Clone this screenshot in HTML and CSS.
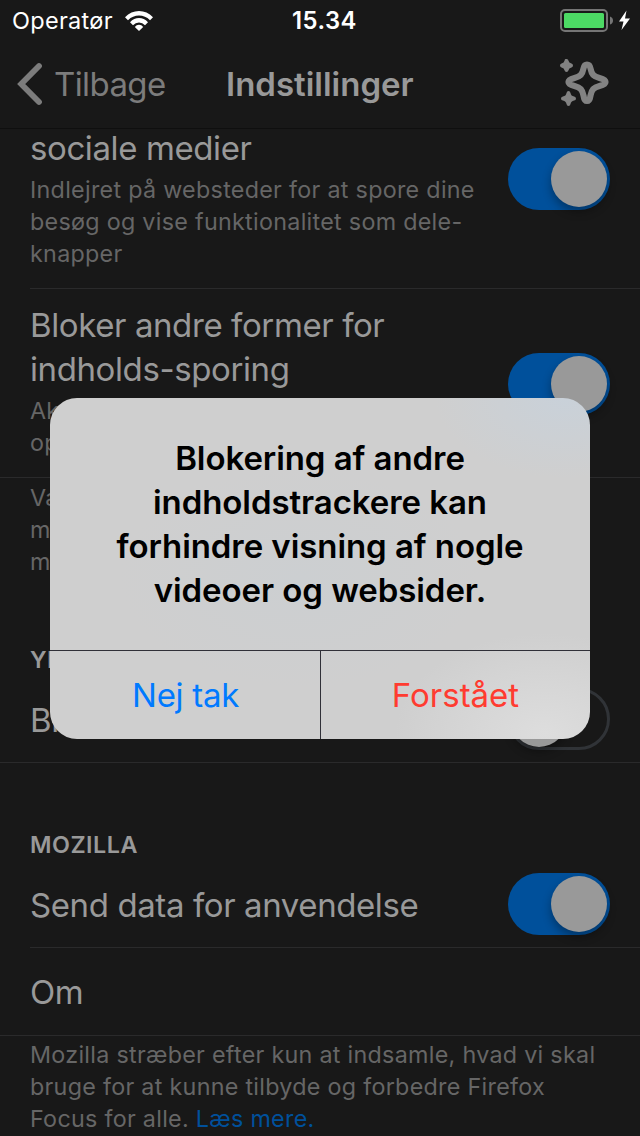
FILE: index.html
```html
<!DOCTYPE html>
<html lang="da">
<head>
<meta charset="utf-8">
<title>Indstillinger</title>
<link rel="stylesheet" href="styles.css">
</head>
<body>
<div class="screen">
  <header class="status">
    <div class="status-left">
      <span class="carrier">Operatør</span>
      <svg class="wifi" width="28" height="20" viewBox="0 0 28 20" fill="#fff">
        <path d="M0 6.200Q6 0 14 0t14 6.200l-3 3Q20.200 4.600 14 4.600T3 9.200z"/>
        <path d="M5 11.200Q9 7 14 7t9 4.200l-3 3Q17.500 11.500 14 11.500T8 14.200z"/>
        <path d="M9.800 16Q11.500 13.700 14 13.700t4.200 2.300L14 20z"/>
      </svg>
    </div>
    <span class="clock">15.34</span>
    <div class="status-right">
      <svg width="72" height="24" viewBox="0 0 72 24">
        <rect x="1" y="1" width="46" height="21" rx="4" fill="none" stroke="#757575" stroke-width="2"/>
        <rect x="4" y="4" width="40" height="15" rx="1.500" fill="#4cd964"/>
        <path d="M50 7.500Q53 8.500 53 11.500T50 15.500z" fill="#757575"/>
        <path d="M66.500 1.500L59 12.500h4.500L61.500 21 70 9.500h-5z" fill="#fff"/>
      </svg>
    </div>
  </header>
  <nav class="nav">
    <div class="back">
      <svg width="26" height="44" viewBox="0 0 26 44" fill="none" stroke="#7c7c7c" stroke-width="5.800" stroke-linecap="round" stroke-linejoin="miter"><path d="M23 4L5.200 22 23 40"/></svg>
      <span class="back-label">Tilbage</span>
    </div>
    <h1 class="nav-title">Indstillinger</h1>
    <svg class="sparkle" width="50" height="50" viewBox="0 0 50 50" fill="#828282">
      <path d="M27 5.500c2.200 0 3 1.500 3.500 4 1.200 6 3 8 9 9.500 4 1 6 1.800 6 4s-2 3-6 4c-6 1.500-7.800 3.500-9 9.500-.5 3.500-1.300 5.500-3.500 5.500s-3-2-3.500-5.500c-1.200-6-3-8-9-9.500-4-1-6-1.800-6-4s2-3 6-4c6-1.500 7.800-3.500 9-9.500.5-2.500 1.300-4 3.500-4z" fill="none" stroke="#828282" stroke-width="6.200"/>
      <path d="M5.500 0q.6-.3 1.200 0 1.600 0 1.800 1.700.3 2.300 3 2.800 1.500.3 1.500 2t-1.500 2Q8.800 9 8.500 11.300 8.200 13 6.500 13T4.500 11.300Q4.200 9 1.500 8.500 0 8.200 0 6.500t1.500-2Q4.200 4 4.500 1.700 4.700.2 5.500 0z"/>
      <path d="M8.500 32q1.600 0 2 1.900.5 3 3.600 3.500 1.900.3 1.900 2.100t-1.900 2.100q-3.100.5-3.600 3.500-.4 1.900-2 1.900t-2-1.900q-.5-3-3.600-3.500Q1 41.300 1 39.500t1.900-2.100q3.100-.5 3.600-3.500.4-1.900 2-1.900z"/>
    </svg>
  </nav>
  <main class="list">
    <section class="row row-first">
      <div class="text">
        <div class="title">sociale medier</div>
        <div class="detail">Indlejret på websteder for at spore dine<br>besøg og vise funktionalitet som dele-<br>knapper</div>
      </div>
      <div class="switch on"><i class="knob"></i></div>
    </section>
    <section class="row row-second">
      <div class="text">
        <div class="title">Bloker andre former for<br>indholds-sporing</div>
        <div class="detail">Ak<br>op</div>
      </div>
      <div class="switch on"><i class="knob"></i></div>
    </section>
    <div class="footnote hidden-note">Va<br>m<br>m</div>
    <h2 class="heading">YD</h2>
    <section class="row row-single full">
      <div class="title">Bl</div>
      <div class="switch off"><i class="knob"></i></div>
    </section>
    <h2 class="heading mozilla">MOZILLA</h2>
    <section class="row row-single">
      <div class="title">Send data for anvendelse</div>
      <div class="switch on"><i class="knob"></i></div>
    </section>
    <section class="row row-about full">
      <div class="title">Om</div>
    </section>
    <div class="footnote">Mozilla stræber efter kun at indsamle, hvad vi skal<br>bruge for at kunne tilbyde og forbedre Firefox<br>Focus for alle. <a class="link">Læs mere.</a></div>
  </main>
  <div class="dialog" role="alertdialog">
    <p class="message">Blokering af andre<br>indholdstrackere kan<br>forhindre visning af nogle<br>videoer og websider.</p>
    <div class="actions">
      <div class="action cancel">Nej tak</div>
      <div class="action confirm">Forstået</div>
    </div>
  </div>
</div>
</body>
</html>
```

FILE: styles.css
```css
* { box-sizing: border-box; }
body { margin: 0; background: #181818; }
.screen {
  position: relative;
  width: 640px;
  height: 1136px;
  overflow: hidden;
  display: flex;
  flex-direction: column;
  background: #181818;
  color: #999;
  font-family: Inter, "Liberation Sans", sans-serif;
}
.status {
  flex: none;
  height: 40px;
  display: grid;
  grid-template-columns: 1fr auto 1fr;
  align-items: center;
  padding: 0 8px 0 12px;
  color: #fff;
}
.status-left { display: flex; align-items: center; gap: 12px; }
.carrier { padding-top: 1px; font-size: 23.5px; line-height: 40px; letter-spacing: 0.3px; }
.clock { padding: 1px 0 0 5px; font-size: 23.8px; line-height: 40px; font-weight: 600; letter-spacing: 0.5px; }
.status-right { display: flex; justify-content: flex-end; }
.nav {
  flex: none;
  height: 89px;
  display: grid;
  grid-template-columns: 210px auto 1fr;
  align-items: center;
  padding: 0 30px 0 16px;
  border-bottom: 1px solid #0f0f0f;
}
.back { display: flex; align-items: center; gap: 12px; }
.back-label { font-size: 33px; line-height: 44px; color: #7c7c7c; letter-spacing: -0.6px; }
.nav-title { margin: 0; font-size: 33px; line-height: 44px; font-weight: 600; color: #999; }
.sparkle { justify-self: end; }
.list { flex: 1; overflow: hidden; }
.row {
  display: flex;
  justify-content: space-between;
  margin-left: 30px;
  padding-right: 30px;
  border-bottom: 1px solid #2a2a2b;
}
.row.full { margin-left: 0; padding-left: 30px; }
.row-first { margin-top: -3px; padding-bottom: 18px; }
.row-first .switch { margin-top: 22px; }
.row-first .detail { margin-top: 4px; }
.row-second { margin-left: 0; padding: 14px 30px 18px; }
.row-second .switch { margin-top: 50px; }
.row-second .detail { margin-top: 4px; }
.title { font-size: 33px; line-height: 44px; white-space: nowrap; letter-spacing: -0.4px; }
.detail, .footnote { font-size: 23.3px; line-height: 32px; color: #666; white-space: nowrap; letter-spacing: 0.29px; }
.footnote { padding: 3px 30px 0; }
.hidden-note { padding-top: 4px; }
.heading { margin: 66px 0 0; padding-left: 30px; font-size: 23.3px; line-height: 32px; font-weight: 600; letter-spacing: 0.5px; }
.row-single { height: 87px; padding-top: 22px; }
.row-single .switch { margin-top: -10px; }
.row-about { height: 88px; padding-top: 22px; }
.link { color: #00509b; }
.switch {
  flex: none;
  width: 102px;
  height: 62px;
  border-radius: 31px;
  display: flex;
  align-items: center;
  padding: 3px;
}
.switch.on { background: #00509b; justify-content: flex-end; }
.switch.off { border: 3px solid #303337; padding: 0; }
.knob { width: 56px; height: 56px; border-radius: 50%; background: #999; box-shadow: 0 5px 10px rgba(0, 0, 0, 0.32); }
.dialog {
  position: absolute;
  left: 50px;
  top: 398px;
  width: 540px;
  height: 341px;
  border-radius: 27px;
  overflow: hidden;
  display: flex;
  flex-direction: column;
  background:
    radial-gradient(ellipse 130px 80px at 515px 0, #c9d1d9, rgba(200, 209, 218, 0)),
    radial-gradient(ellipse 150px 100px at 495px 335px, #dddddd, rgba(221, 221, 221, 0)),
    radial-gradient(ellipse 180px 110px at 250px 180px, #cccfd1, rgba(204, 207, 209, 0)),
    #cfcfcf;
}
.message { margin: 0; height: 252px; padding-top: 38px; font-size: 33px; line-height: 44px; font-weight: 600; color: #000; text-align: center; white-space: nowrap; letter-spacing: -0.07px; }
.actions { flex: 1; display: grid; grid-template-columns: 271px 1fr; border-top: 1px solid #303038; }
.action { font-size: 33px; line-height: 88px; text-align: center; }
.cancel { padding-left: 1px; color: #007aff; border-right: 1px solid #303038; letter-spacing: -0.3px; }
.confirm { color: #ff3b30; }
```
